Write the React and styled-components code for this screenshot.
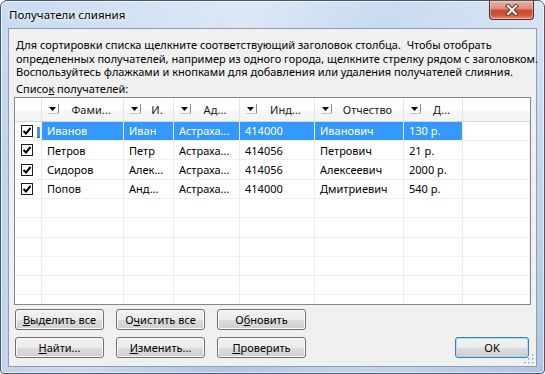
import React from 'react';
import styled, { createGlobalStyle } from 'styled-components';

const Global = createGlobalStyle`
  html, body { margin: 0; padding: 0; background: #ffffff; }
  body { font-family: "Noto Sans", "Open Sans", sans-serif; font-size: 11px; color: #000; }
  #root { width: 545px; height: 374px; }
`;

const Window = styled.div`
  width: 545px;
  height: 374px;
  box-sizing: border-box;
  border: 1px solid #4a586b;
  border-radius: 7px 7px 4px 4px;
  background:
    linear-gradient(115deg, rgba(255,255,255,0) 0%, rgba(255,255,255,0.35) 35%, rgba(255,255,255,0) 55%, rgba(255,255,255,0.25) 75%, rgba(255,255,255,0) 100%),
    linear-gradient(180deg, #cadcf2 0%, #bcd1eb 40%, #aec6e5 100%);
  box-shadow: inset 0 0 0 1px rgba(255,255,255,0.6);
  display: flex;
  flex-direction: column;
  overflow: hidden;
`;

const TitleBar = styled.div`
  height: 27px;
  display: flex;
  align-items: flex-start;
  justify-content: space-between;
`;

const Title = styled.div`
  padding: 7px 0 0 8px;
  font-size: 11.5px;
  line-height: 14px;
  color: #000;
  text-shadow: 0 0 6px rgba(255,255,255,0.9), 0 0 3px rgba(255,255,255,0.9);
`;

const CloseButton = styled.div`
  width: 45px;
  height: 19px;
  margin: 0 10px 0 0;
  box-sizing: border-box;
  border: 1px solid #5a2a22;
  border-top: none;
  border-radius: 0 0 4px 4px;
  background: linear-gradient(180deg, #eab2a6 0%, #d98a78 45%, #c64a2f 50%, #cf5a3d 80%, #e59582 100%);
  box-shadow: inset 0 0 0 1px rgba(255,255,255,0.35);
  display: flex;
  align-items: center;
  justify-content: center;
`;

const Client = styled.div`
  position: relative;
  flex: 1;
  margin: 0 7px 6px 7px;
  border: 1px solid #8d9db3;
  background: #f0f0f0;
  padding: 9px 5px 8px 5px;
  display: flex;
  flex-direction: column;
`;

const Intro = styled.div`
  margin-left: 2px;
  line-height: 13.6px;
  white-space: nowrap;
`;

const ListLabel = styled.div`
  margin: 3px 0 1px 2px;
  line-height: 14px;
`;

const Table = styled.div`
  height: 208px;
  box-sizing: border-box;
  border: 1px solid #828790;
  background: #fff;
  overflow: hidden;
`;

const cols = '27px 82px 50px 66px 75px 89px 59px 1fr';

const HeaderRow = styled.div`
  display: grid;
  grid-template-columns: ${cols};
  height: 24px;
  box-sizing: border-box;
  border-bottom: 1px solid #d5d5d5;
  background: linear-gradient(180deg, #ffffff 0%, #ffffff 50%, #f7f8fa 51%, #f3f4f6 100%);
`;

const HeaderCell = styled.div`
  display: flex;
  align-items: center;
  padding-left: 6px;
  border-right: 1px solid #e3e5e8;
  color: #1a1a1a;
  overflow: hidden;
  white-space: nowrap;
`;

const HeaderLabel = styled.span`
  flex: 1;
  text-align: center;
`;

const Row = styled.div`
  display: grid;
  grid-template-columns: ${cols};
  height: 19.3px;
  box-sizing: border-box;
  border-bottom: 1px solid #efefef;
`;

const Cell = styled.div`
  display: flex;
  align-items: center;
  padding-left: 5px;
  border-right: 1px solid #ececec;
  white-space: nowrap;
  overflow: hidden;
  background: ${p => (p.$selected ? '#3399ff' : 'transparent')};
  color: ${p => (p.$selected ? '#ffffff' : '#000000')};
`;

const CheckCell = styled.div`
  display: flex;
  align-items: center;
  justify-content: space-between;
  padding-left: 6px;
  padding-right: 1px;
  border-right: 1px solid #ececec;
`;

const Box = styled.span`
  width: 12px;
  height: 12px;
  box-sizing: border-box;
  border: 1px solid #1c1c1c;
  background: #fff;
  display: flex;
  align-items: center;
  justify-content: center;
`;

const FocusMark = styled.span`
  align-self: flex-end;
  width: 3px;
  height: 10px;
  margin-bottom: 2px;
  background: #3399ff;
  border-bottom: 1px solid #555;
`;

const Buttons = styled.div`
  margin: 4px 2px 0 1px;
  display: grid;
  grid-template-columns: 89px 89px 89px 1fr 74px;
  grid-template-rows: 21px 21px;
  row-gap: 7px;
  column-gap: 12px;
`;

const Button = styled.div`
  grid-column: ${p => p.$col};
  box-sizing: border-box;
  border: 1px solid ${p => (p.$default ? '#3c7fb1' : '#707070')};
  border-radius: 3px;
  background: linear-gradient(180deg, #f2f2f2 0%, #ebebeb 50%, #dddddd 51%, #cfcfcf 100%);
  box-shadow: inset 0 0 0 1px ${p => (p.$default ? '#a8dcf5' : '#fbfbfb')};
  display: flex;
  align-items: center;
  justify-content: center;
  color: #000;
  white-space: nowrap;
`;

const Grip = styled.svg`
  position: absolute;
  right: 1px;
  bottom: 1px;
`;

const Arrow = () => (
  <svg width="11" height="10" viewBox="0 0 11 10" style={{ flex: 'none' }}>
    <polygon points="1,3 8,3 4.5,7" fill="#000" />
    <line x1="10.5" y1="0" x2="10.5" y2="10" stroke="#8a8a8a" />
    <line x1="0" y1="9.5" x2="11" y2="9.5" stroke="#c8c8c8" />
  </svg>
);

const Check = () => (
  <Box>
    <svg width="10" height="10" viewBox="0 0 10 10">
      <polyline points="1.5,5 4,7.5 8.5,2" fill="none" stroke="#000" strokeWidth="2" />
    </svg>
  </Box>
);

const headers = ['Фами...', 'И.', 'Ад...', 'Инд...', 'Отчество', 'Д...'];

const rows = [
  ['Иванов', 'Иван', 'Астраха...', '414000', 'Иванович', '130 р.'],
  ['Петров', 'Петр', 'Астраха...', '414056', 'Петрович', '21 р.'],
  ['Сидоров', 'Алек...', 'Астраха...', '414056', 'Алексеевич', '2000 р.'],
  ['Попов', 'Анд...', 'Астраха...', '414000', 'Дмитриевич', '540 р.'],
];

export default function App() {
  return (
    <>
      <Global />
      <Window>
        <TitleBar>
          <Title>Получатели слияния</Title>
          <CloseButton>
            <svg width="14" height="12" viewBox="0 0 14 12">
              <path d="M3 2 L11 10 M11 2 L3 10" stroke="#5b2a22" strokeWidth="4" strokeLinecap="square" />
              <path d="M3 2 L11 10 M11 2 L3 10" stroke="#ffffff" strokeWidth="2.2" strokeLinecap="square" />
            </svg>
          </CloseButton>
        </TitleBar>
        <Client>
          <Intro>
            Для сортировки списка щелкните соответствующий заголовок столбца.{'\u00a0 '}Чтобы отобрать
            <br />
            определенных получателей, например из одного города, щелкните стрелку рядом с заголовком.
            <br />
            Воспользуйтесь флажками и кнопками для добавления или удаления получателей слияния.
          </Intro>
          <ListLabel>
            Списо<u>к</u> получателей:
          </ListLabel>
          <Table>
            <HeaderRow>
              <HeaderCell />
              {headers.map(h => (
                <HeaderCell key={h}>
                  <Arrow />
                  <HeaderLabel>{h}</HeaderLabel>
                </HeaderCell>
              ))}
              <HeaderCell style={{ borderRight: 'none' }} />
            </HeaderRow>
            {rows.map((r, i) => (
              <Row key={i}>
                <CheckCell>
                  <Check />
                  {i === 0 && <FocusMark />}
                </CheckCell>
                {r.map((c, j) => (
                  <Cell key={j} $selected={i === 0}>{c}</Cell>
                ))}
                <Cell />
              </Row>
            ))}
            {Array.from({ length: 7 }).map((_, i) => (
              <Row key={'e' + i}>
                <CheckCell />
                {Array.from({ length: 7 }).map((__, j) => (
                  <Cell key={j} />
                ))}
              </Row>
            ))}
          </Table>
          <Buttons>
            <Button $col={1}><span><u>В</u>ыделить все</span></Button>
            <Button $col={2}><span>О<u>ч</u>истить все</span></Button>
            <Button $col={3}><span>О<u>б</u>новить</span></Button>
            <Button $col={1}><span><u>Н</u>айти...</span></Button>
            <Button $col={2}><span><u>И</u>зменить...</span></Button>
            <Button $col={3}><span><u>П</u>роверить</span></Button>
            <Button $col={5} $default>OK</Button>
          </Buttons>
          <Grip width="11" height="11" viewBox="0 0 11 11">
            {[[9, 1], [9, 5], [5, 5], [9, 9], [5, 9], [1, 9]].map(([x, y], k) => (
              <g key={k}>
                <rect x={x} y={y} width="1.5" height="1.5" fill="#fff" />
                <rect x={x - 1} y={y - 1} width="1.5" height="1.5" fill="#9aa4b0" />
              </g>
            ))}
          </Grip>
        </Client>
      </Window>
    </>
  );
}
